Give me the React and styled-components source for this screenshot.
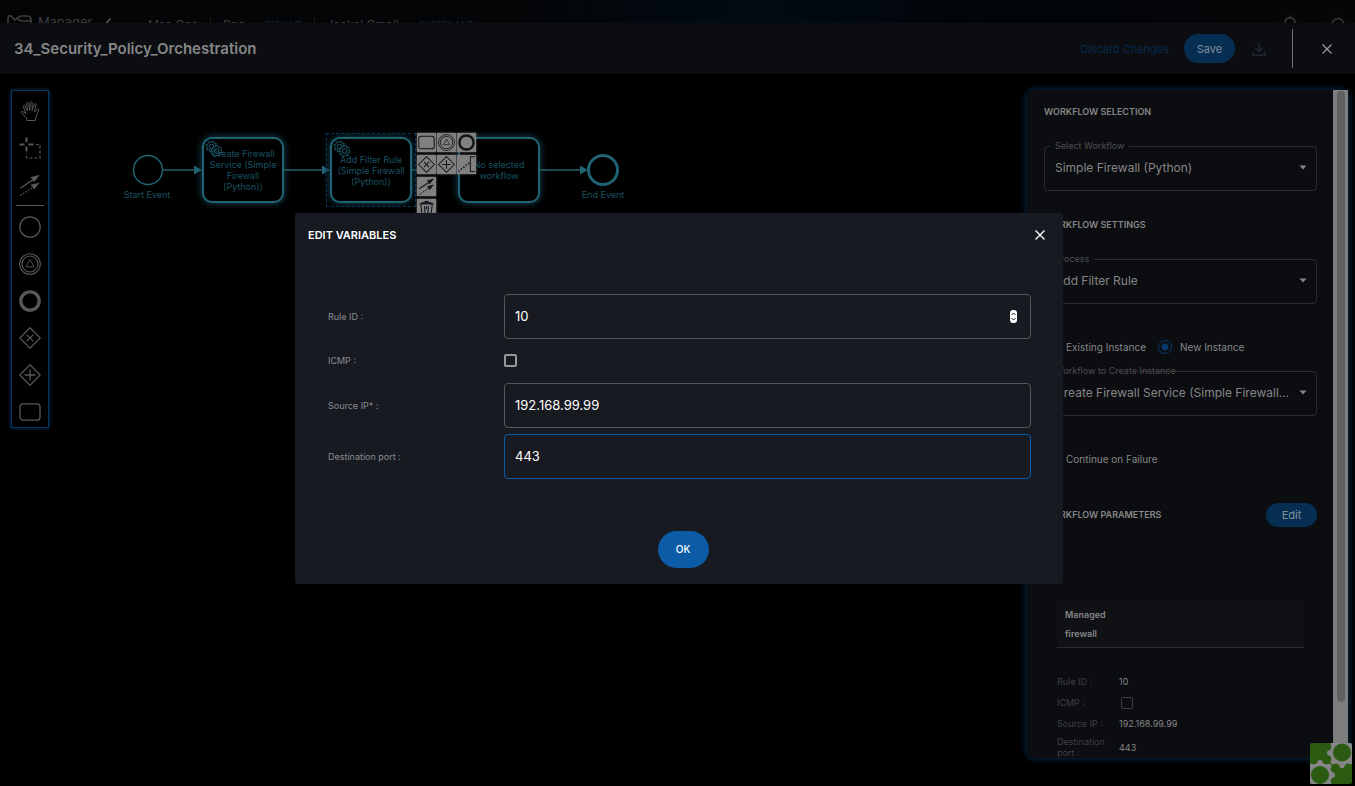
import React from "react";
import styled, { createGlobalStyle, css } from "styled-components";

const GlobalStyle = createGlobalStyle`
  * { box-sizing: border-box; }
  html, body, #root { height: 100%; }
  body {
    margin: 0;
    background: #000;
    color: #858687;
    font-family: Inter, Roboto, "Liberation Sans", sans-serif;
    font-size: 12px;
  }
  button, input, select { font: inherit; color: inherit; margin: 0; }
  button { padding: 0; border: 0; background: none; cursor: pointer; }
`;

/* ---------- page frame ---------- */

const Page = styled.div`
  min-height: 100vh;
  display: flex;
  flex-direction: column;
`;

const TopBar = styled.nav`
  height: 23px;
  overflow: hidden;
  display: flex;
  align-items: flex-start;
  padding: 13px 0 0 7px;
  color: #3c3d3f;
  background: linear-gradient(90deg, #040507 0%, #040507 38%, #000b14 56%, #020509 72%, #040506 100%);
`;

const Brand = styled.span`
  display: flex;
  gap: 6px;
  width: 97px;
  font-size: 13px;
  line-height: 18px;
`;

const Crumbs = styled.div`
  display: flex;
  gap: 12px;
  flex: 1;
  padding: 4px 0 0 36px;
  font-size: 12px;
  line-height: 16px;
`;

const Crumb = styled.span`
  display: flex;
  gap: 20px;
`;

const CrumbRule = styled.span`
  width: 1px;
  height: 16px;
  background: #17181b;
`;

const CrumbKind = styled.span`
  color: #1c2434;
  font-size: 9px;
`;

const TopActions = styled.div`
  display: flex;
  gap: 16px;
  padding-right: 1px;
`;

const RoundButton = styled.button`
  width: 32px;
  height: 32px;
  border-radius: 50%;
  margin-top: -5px;
  background: #060709;
`;

const EditorBar = styled.header`
  height: 51px;
  flex: none;
  display: flex;
  align-items: center;
  padding: 0 20px 0 14px;
  background: #0c0d10;
`;

const Title = styled.h1`
  margin: 0;
  flex: 1;
  font-size: 15px;
  font-weight: 600;
`;

const TextButton = styled.button`
  color: #042a4e;
  font-size: 11px;
`;

const Pill = styled.button`
  min-width: 51px;
  height: ${(p) => p.$height}px;
  border-radius: 20px;
  font-size: ${(p) => p.$font}px;
  font-weight: ${(p) => (p.$bright ? 500 : 400)};
  color: ${(p) => (p.$bright ? "#fff" : "#82909c")};
  background: ${(p) => (p.$bright ? "#0b5ba7" : "#062e53")};
`;

const EditorActions = styled.div`
  display: flex;
  align-items: center;
  gap: 15px;
`;

const IconButton = styled.button`
  display: flex;
  align-items: center;
  justify-content: center;
  width: ${(p) => p.$size}px;
  height: ${(p) => p.$size}px;
`;

const CloseArea = styled.div`
  display: flex;
  align-items: center;
  height: 39px;
  margin-left: 9px;
  padding-left: 26px;
  border-left: 1px solid #707173;
`;

const Workspace = styled.main`
  flex: 1;
  position: relative;
  display: flex;
  justify-content: space-between;
  padding: 16px 7px 28px 11px;
`;

/* ---------- palette ---------- */

const Palette = styled.div`
  align-self: flex-start;
  display: flex;
  flex-direction: column;
  align-items: center;
  width: 38px;
  padding-top: 5px;
  border: 1px solid #063763;
  box-shadow: 0 0 4px #063763;
  color: #585858;
`;

const PaletteGroup = styled.div`
  display: flex;
  flex-direction: column;
  align-items: center;
  gap: 7px;
  width: 28px;
  ${(p) =>
    p.$ruled
      ? css`
          padding-bottom: 5px;
          border-bottom: 1px solid #585858;
        `
      : css`
          padding-top: 6px;
        `}
`;

/* ---------- diagram ---------- */

const at = css`
  position: absolute;
  left: ${(p) => p.$x}px;
  top: ${(p) => p.$y}px;
`;

const Diagram = styled.div`
  position: absolute;
  left: 0;
  top: 0;
  width: 640px;
  height: 150px;
  color: #1a5361;
  font-size: 9px;
  line-height: 11px;
  text-align: center;
`;

const Edges = styled.svg`
  ${at}
`;

const TaskNode = styled.div`
  ${at}
  width: 82px;
  height: 66px;
  display: flex;
  align-items: center;
  justify-content: center;
  border: 2px solid #206373;
  border-radius: 10px;
  background: #000;
  box-shadow: 0 0 7px #174d5b;
  svg { position: absolute; left: 1px; top: 1px; }
`;

const TaskText = styled.div`
  position: relative;
`;

const Selection = styled.div`
  ${at}
  width: 90px;
  height: 74px;
  border: 1px dashed #06345c;
`;

const EventLabel = styled.div`
  ${at}
  width: 60px;
`;

const ContextPad = styled.div`
  ${at}
  display: flex;
  flex-direction: column;
  gap: 3px;
`;

const PadRow = styled.div`
  display: flex;
  gap: 1px;
`;

const PadButton = styled.button`
  display: flex;
  align-items: center;
  justify-content: center;
  width: 19px;
  height: 19px;
  color: #111519;
  background: #808080;
  box-shadow: 0 0 2px #777;
`;

/* ---------- side panel ---------- */

const SidePanel = styled.aside`
  display: flex;
  width: 321px;
  height: 668px;
  overflow: hidden;
  border-radius: 8px 0 0 8px;
  background: #0c0d10;
`;

const PanelGlow = styled.div`
  align-self: flex-start;
  border-radius: 8px;
  box-shadow: 0 0 6px 1px #052a49;
`;

const PanelBody = styled.div`
  flex: 1;
  min-width: 0;
  padding: 16px 16px 0 17px;
`;

const ScrollTrack = styled.div`
  width: 15px;
  padding: 1px 3px 0 4px;
  background: #7e7e7e;
`;

const ScrollThumb = styled.div`
  height: 611px;
  border-radius: 4px;
  background: #606060;
`;

const SectionTitle = styled.h2`
  margin: 0;
  font-size: 9px;
  font-weight: 600;
  line-height: 12px;
`;

const Field = styled.div`
  position: relative;
  margin: ${(p) => p.$top}px 0 ${(p) => p.$bottom}px;
`;

const FieldNotch = styled.span`
  position: absolute;
  left: 7px;
  top: 0;
  width: ${(p) => p.$width}px;
  height: 1px;
  background: #0c0d10;
`;

const FieldLabel = styled.label`
  position: absolute;
  left: 11px;
  top: -6px;
  color: #4e4f51;
  font-size: 9px;
  line-height: 12px;
`;

const FieldSelect = styled.select`
  display: block;
  width: 100%;
  height: 45px;
  padding: 0 24px 2px 10px;
  appearance: none;
  border: 1px solid #2b2c2f;
  border-radius: 4px;
  background: transparent;
  font-size: 12px;
  text-overflow: ellipsis;
  outline: 0;
`;

const Caret = styled.svg`
  position: absolute;
  right: 10px;
  top: 19px;
  pointer-events: none;
`;

const Choices = styled.div`
  display: flex;
  align-items: center;
  gap: 12px;
  height: 14px;
  font-size: 10px;
`;

const Choice = styled.label`
  display: flex;
  align-items: center;
  gap: 8px;
`;

const Radio = styled.input`
  appearance: none;
  width: 14px;
  height: 14px;
  border-radius: 50%;
  border: 1px solid ${(p) => (p.defaultChecked ? "#063c6c" : "#666")};
  background: ${(p) => (p.defaultChecked ? "radial-gradient(circle, #063c6c 3px, transparent 4px)" : "none")};
`;

const Check = styled.input`
  appearance: none;
  width: ${(p) => p.$size}px;
  height: ${(p) => p.$size}px;
  border: ${(p) => (p.$bright ? "2px solid #97989a" : "1px solid #3e3f41")};
  border-radius: 2px;
`;

const ParamHeader = styled.div`
  display: flex;
  align-items: center;
  justify-content: space-between;
  margin-top: 37px;
`;

const ManagedBox = styled.div`
  margin: 74px 13px 23px;
  padding: 4px 8px;
  border-bottom: 1px solid #2b2c2f;
  background: #101115;
  font-size: 9px;
  font-weight: 600;
  line-height: 19px;
`;

const Params = styled.dl`
  margin: 0 13px;
  font-size: 9px;
  line-height: 11px;
`;

const Param = styled.div`
  display: flex;
  align-items: center;
  min-height: ${(p) => (p.$tall ? 26 : 21)}px;
  dt { width: 62px; padding-right: 8px; color: #3f4042; }
  dd { margin: 0; display: flex; }
`;

const CheckSlot = styled.span`
  display: flex;
  padding-left: 2px;
`;

const HelpBadge = styled.button`
  position: absolute;
  right: 3px;
  bottom: 1px;
  width: 42px;
  height: 42px;
`;

/* ---------- dialog ---------- */

const Backdrop = styled.div`
  position: fixed;
  inset: 0;
  display: flex;
  align-items: center;
  justify-content: center;
  padding: 10px 0 0 3px;
`;

const Dialog = styled.section`
  width: 768px;
  max-width: 96%;
  border-radius: 3px;
  background: #181a21;
  color: #fff;
`;

const DialogHeader = styled.header`
  display: flex;
  align-items: center;
  justify-content: space-between;
  height: 45px;
  padding: 0 13px;
`;

const DialogTitle = styled.h2`
  margin: 0;
  font-size: 11px;
  font-weight: 600;
`;

const Form = styled.form`
  display: flex;
  flex-direction: column;
  gap: 6px;
  padding: 36px 32px 0 33px;
`;

const FormRow = styled.div`
  display: flex;
  align-items: center;
  min-height: 32px;
`;

const FormLabel = styled.label`
  width: 176px;
  color: #8b8c90;
  font-size: 9px;
`;

const InputBox = styled.div`
  flex: 1;
  display: flex;
  align-items: center;
  height: 45px;
  padding: 0 13px 0 10px;
  border: 1px solid ${(p) => (p.$active ? "#0b5ba7" : "#55575a")};
  border-radius: 4px;
`;

const Input = styled.input`
  flex: 1;
  min-width: 0;
  padding: 0;
  border: 0;
  outline: 0;
  background: none;
  font-size: 13px;
  appearance: textfield;
  &::-webkit-inner-spin-button { display: none; }
`;

const DialogActions = styled.footer`
  display: flex;
  justify-content: center;
  padding: 52px 0 16px 8px;
`;

/* ---------- drawings ---------- */

const Gear = ({ cx, cy, r, stroke }) => {
  const pts = [];
  for (let i = 0; i < 32; i++) {
    const rad = i % 4 < 2 ? r : r * 0.76;
    const a = ((i + 0.5) / 32) * Math.PI * 2;
    pts.push(`${(cx + rad * Math.cos(a)).toFixed(2)},${(cy + rad * Math.sin(a)).toFixed(2)}`);
  }
  return (
    <g fill="#000" stroke={stroke} strokeWidth="1">
      <polygon points={pts.join(" ")} />
      <circle cx={cx} cy={cy} r={r * 0.42} />
    </g>
  );
};

const Gears = () => (
  <svg width="18" height="18" viewBox="0 0 18 18">
    <Gear cx={6.5} cy={6.5} r={5.6} stroke="#206373" />
    <Gear cx={11.5} cy={11} r={5.6} stroke="#206373" />
  </svg>
);

const shapes = {
  hand: (
    <path
      d="M8 20.5 L7.4 18 L2.2 12.5 C1.6 11.7 2.8 10.8 3.7 11.5 L7 13.8 L4.2 6.4 C3.9 5.2 5.4 4.8 5.9 5.9 L8.5 11 L7.7 3.3 C7.7 2 9.3 2 9.5 3.2 L10.7 10.4 L11.4 2.4 C11.6 1.3 13.1 1.4 13.2 2.6 L13.1 10.6 L15.4 4.2 C15.9 3.1 17.2 3.6 17 4.8 L15.5 12 L18 9.4 C18.9 8.5 20.2 9 19.7 10.2 C18.3 13.5 17.6 16 16.6 18 L16.3 20.5 Z"
      strokeWidth="1"
    />
  ),
  lasso: (
    <>
      <path d="M7.5 0.5 V5.5 M7.5 9.5 V14.5 M0.5 7.5 H5.5 M9.5 7.5 H14.5" strokeWidth="2" />
      <path d="M17 7.5 H21 V21 H7.5 V16" strokeDasharray="3 2" strokeWidth="1.2" />
    </>
  ),
  connect: (
    <>
      <path d="M1.5 14 L14.5 5.5" strokeWidth="1.4" />
      <path d="M1.5 21.5 L14.5 13" strokeDasharray="1.5 1.5" strokeWidth="1.4" />
      <path d="M11.5 3.2 L20.8 0.8 L15.2 8 Z M11.5 10.8 L20.8 8.4 L15.2 15.6 Z" fill="currentColor" stroke="none" />
    </>
  ),
  circle: <circle cx="11" cy="11" r="10.2" strokeWidth="1.2" />,
  signal: (
    <>
      <circle cx="11" cy="11" r="10.3" strokeWidth="1.1" />
      <circle cx="11" cy="11" r="8" strokeWidth="1.1" />
      <path d="M11 6.5 L15 13.8 H7 Z" strokeWidth="0.9" />
    </>
  ),
  end: <circle cx="11" cy="11" r="9.2" strokeWidth="3.2" />,
  exclusive: <path d="M11 0.8 L21.2 11 L11 21.2 L0.8 11 Z M7.6 7.6 L14.4 14.4 M14.4 7.6 L7.6 14.4" strokeWidth="1.3" />,
  parallel: <path d="M11 0.8 L21.2 11 L11 21.2 L0.8 11 Z M11 5.6 V16.4 M5.6 11 H16.4" strokeWidth="1.3" />,
  task: <rect x="1" y="2.8" width="20" height="16.4" rx="3" strokeWidth="1.3" />,
  annotation: (
    <>
      <path d="M22 1 H16 V20 H22" strokeWidth="1.3" />
      <path d="M0.5 20 L15 8.5" strokeDasharray="2 2" strokeWidth="2" />
    </>
  ),
  trash: (
    <path
      d="M3.5 5.5 L5.5 21 H16.5 L18.5 5.5 M2 5 H20 M3.5 4.8 C5 2.5 17 2.5 18.5 4.8 M8.5 2 H13.5 M8.5 8 L9.3 20 M13.5 8 L12.7 20 M11 8 V12"
      strokeWidth="1.4"
    />
  ),
};

const Glyph = ({ name, size }) => (
  <svg width={size} height={size} viewBox="0 0 22 22" fill="none" stroke="currentColor" aria-hidden="true">
    {shapes[name]}
  </svg>
);

const Cross = ({ size, color }) => (
  <svg width={size} height={size} viewBox="0 0 10 10" stroke={color} strokeWidth="1.3" aria-hidden="true">
    <path d="M0.5 0.5 L9.5 9.5 M9.5 0.5 L0.5 9.5" />
  </svg>
);

const cog = (cx, cy, r) => {
  const pts = [];
  for (let i = 0; i < 32; i++) {
    const rad = i % 4 < 2 ? r + 3 : r;
    const a = ((i - 0.5) / 32) * Math.PI * 2;
    pts.push(`${(cx + rad * Math.cos(a)).toFixed(2)},${(cy + rad * Math.sin(a)).toFixed(2)}`);
  }
  return pts.join(" ");
};

const GreenGears = () => (
  <svg width="42" height="42" viewBox="0 0 42 42" aria-hidden="true">
    <clipPath id="badge">
      <rect width="42" height="41" rx="2" />
    </clipPath>
    <g clipPath="url(#badge)">
      <rect width="42" height="42" fill="#2a5b10" />
      <polygon points={cog(32, 10, 12)} fill="#858585" />
      <polygon points={cog(10, 32, 12)} fill="#858585" />
      <circle cx="32" cy="9.500" r="9" fill="#2a5b10" />
      <circle cx="10" cy="32" r="9" fill="#2a5b10" />
    </g>
  </svg>
);

/* ---------- data ---------- */

const creationTools = [
  ["circle", "Start event"],
  ["signal", "Intermediate event"],
  ["end", "End event"],
  ["exclusive", "Exclusive gateway"],
  ["parallel", "Parallel gateway"],
  ["task", "Task"],
];

const padRows = [
  ["task", "signal", "end"],
  ["exclusive", "parallel", "annotation"],
  ["connect"],
  ["trash"],
];

const tasks = [
  { x: 202, lines: ["Create Firewall", "Service (Simple", "Firewall", "(Python))"], gears: true },
  { x: 330, lines: ["Add Filter Rule", "(Simple Firewall", "(Python))"], gears: true },
  { x: 458, lines: ["No selected", "workflow"] },
];

const arrows = [
  [162, 202],
  [284, 330],
  [412, 458],
  [540, 588],
];

const SelectField = ({ id, label, value, top, bottom, notch }) => (
  <Field $top={top} $bottom={bottom}>
    <FieldSelect id={id} defaultValue={value}>
      <option>{value}</option>
    </FieldSelect>
    <FieldNotch $width={notch} />
    <FieldLabel htmlFor={id}>{label}</FieldLabel>
    <Caret width="8" height="5" viewBox="0 0 8 5">
      <path d="M0.500 0.500 H7.500 L4 4.500 Z" fill="#858687" />
    </Caret>
  </Field>
);

export default function App() {
  return (
    <Page>
      <GlobalStyle />
      <TopBar>
        <Brand>
          <svg width="25" height="16" viewBox="0 0 25 16" fill="none" stroke="#3c3d3f" strokeWidth="1.6">
            <path d="M1 12 V5 C1 2 3.500 2 5 4 L8 7 L11 4.500 Q12.500 3 15 3 H20 Q24 3 24 7 V12 M11 4.500 Q11 8 15 8 H24 M12 12 H21" />
          </svg>
          Manager
        </Brand>
        <svg width="8" height="12" viewBox="0 0 8 12" fill="none" stroke="#5c5d5f" strokeWidth="1.5">
          <path d="M6.500 5.500 L1.500 11" />
        </svg>
        <Crumbs>
          <Crumb>Msa Ops</Crumb>
          <CrumbRule />
          <Crumb>
            Bps <CrumbKind>TENANT</CrumbKind>
          </Crumb>
          <CrumbRule />
          <Crumb>
            Jackal Gmail <CrumbKind>SUBTENANT ::</CrumbKind>
          </Crumb>
        </Crumbs>
        <TopActions>
          <RoundButton aria-label="Notifications">
            <svg width="14" height="16" viewBox="0 0 14 16" fill="none" stroke="#3c3d3f" strokeWidth="1.4">
              <path d="M7 0.500 V3 M2 14 V8 Q2 3 7 3 Q12 3 12 8 V14" />
            </svg>
          </RoundButton>
          <RoundButton aria-label="Account">
            <svg width="14" height="14" viewBox="0 0 14 14" fill="none" stroke="#3c3d3f" strokeWidth="1.4">
              <circle cx="7" cy="8" r="5.500" />
            </svg>
          </RoundButton>
        </TopActions>
      </TopBar>

      <EditorBar>
        <Title>34_Security_Policy_Orchestration</Title>
        <EditorActions>
          <TextButton>Discard Changes</TextButton>
          <Pill $height={29} $font={11}>Save</Pill>
          <IconButton $size={18} aria-label="Download">
            <svg width="14" height="14" viewBox="0 0 14 14" fill="none" stroke="#222a38" strokeWidth="1.4">
              <path d="M7 0.500 V9.500 M3 5.500 L7 9.500 L11 5.500 M1 9.500 V13 H13 V9.500" />
            </svg>
          </IconButton>
          <CloseArea>
            <IconButton $size={16} aria-label="Close editor">
              <Cross size={10} color="#97989a" />
            </IconButton>
          </CloseArea>
        </EditorActions>
      </EditorBar>

      <Workspace>
        <Diagram>
          <Edges $x={0} $y={0} width="640" height="150" fill="none" stroke="#206373" strokeWidth="1.500">
            <circle cx="148" cy="96" r="14.500" />
            <circle cx="603" cy="96" r="14.500" strokeWidth="3" />
            {arrows.map(([from, to]) => (
              <g key={from}>
                <path d={`M${from} 96 H${to - 8}`} />
                <path d={`M${to - 8} 91.500 L${to} 96 L${to - 8} 100.500 Z`} fill="#206373" stroke="none" />
              </g>
            ))}
          </Edges>
          <EventLabel $x={117} $y={115}>Start Event</EventLabel>
          <EventLabel $x={573} $y={115}>End Event</EventLabel>
          {tasks.map((task) => (
            <TaskNode key={task.x} $x={task.x} $y={63}>
              {task.gears && <Gears />}
              <TaskText>
                {task.lines.map((line) => (
                  <div key={line}>{line}</div>
                ))}
              </TaskText>
            </TaskNode>
          ))}
          <Selection $x={326} $y={59} />
          <ContextPad $x={417} $y={59}>
            {padRows.map((row) => (
              <PadRow key={row[0]}>
                {row.map((name) => (
                  <PadButton key={name} aria-label={name}>
                    <Glyph name={name} size={17} />
                  </PadButton>
                ))}
              </PadRow>
            ))}
          </ContextPad>
        </Diagram>

        <Palette>
          <PaletteGroup $ruled>
            <IconButton $size={30} aria-label="Hand tool"><Glyph name="hand" size={22} /></IconButton>
            <IconButton $size={30} aria-label="Lasso tool"><Glyph name="lasso" size={22} /></IconButton>
            <IconButton $size={30} aria-label="Connect tool"><Glyph name="connect" size={22} /></IconButton>
          </PaletteGroup>
          <PaletteGroup>
            {creationTools.map(([name, label]) => (
              <IconButton key={name} $size={30} aria-label={label}>
                <Glyph name={name} size={22} />
              </IconButton>
            ))}
          </PaletteGroup>
        </Palette>

        <PanelGlow>
          <SidePanel>
            <PanelBody>
              <SectionTitle>WORKFLOW SELECTION</SectionTitle>
              <SelectField id="workflow" label="Select Workflow" value="Simple Firewall (Python)" top={28} bottom={28} notch={78} />
              <SectionTitle>WORKFLOW SETTINGS</SectionTitle>
              <SelectField id="process" label="Process" value="Add Filter Rule" top={28} bottom={36} notch={43} />
              <Choices>
                <Choice>
                  <Radio type="radio" name="instance" />
                  Existing Instance
                </Choice>
                <Choice>
                  <Radio type="radio" name="instance" defaultChecked />
                  New Instance
                </Choice>
              </Choices>
              <SelectField
                id="creator"
                label="Workflow to Create Instance"
                value="Create Firewall Service (Simple Firewall (Python))"
                top={17}
                bottom={36}
                notch={87}
              />
              <Choices>
                <Choice>
                  <Check type="checkbox" $size={14} />
                  Continue on Failure
                </Choice>
              </Choices>
              <ParamHeader>
                <SectionTitle>WORKFLOW PARAMETERS</SectionTitle>
                <Pill $height={24} $font={11}>Edit</Pill>
              </ParamHeader>
              <ManagedBox>
                <div>Managed</div>
                <div>firewall</div>
              </ManagedBox>
              <Params>
                <Param><dt>Rule ID :</dt><dd>10</dd></Param>
                <Param>
                  <dt>ICMP :</dt>
                  <dd><CheckSlot><Check type="checkbox" $size={12} aria-label="ICMP value" /></CheckSlot></dd>
                </Param>
                <Param><dt>Source IP :</dt><dd>192.168.99.99</dd></Param>
                <Param $tall><dt>Destination port :</dt><dd>443</dd></Param>
              </Params>
            </PanelBody>
            <ScrollTrack><ScrollThumb /></ScrollTrack>
          </SidePanel>
        </PanelGlow>
        <HelpBadge aria-label="Process status"><GreenGears /></HelpBadge>
      </Workspace>

      <Backdrop>
        <Dialog role="dialog" aria-labelledby="dialog-title">
          <DialogHeader>
            <DialogTitle id="dialog-title">EDIT VARIABLES</DialogTitle>
            <IconButton $size={20} aria-label="Close">
              <Cross size={10} color="#fff" />
            </IconButton>
          </DialogHeader>
          <Form>
            <FormRow>
              <FormLabel htmlFor="rule">Rule ID :</FormLabel>
              <InputBox>
                <Input id="rule" type="number" defaultValue="10" />
                <svg width="7" height="13" viewBox="0 0 7 13" aria-hidden="true">
                  <rect width="7" height="13" rx="3" fill="#fff" />
                  <path d="M1.500 5 L3.500 3 L5.500 5 M1.500 8 L3.500 10 L5.500 8" fill="none" stroke="#222" />
                </svg>
              </InputBox>
            </FormRow>
            <FormRow>
              <FormLabel htmlFor="icmp">ICMP :</FormLabel>
              <Check id="icmp" type="checkbox" $size={13} $bright />
            </FormRow>
            <FormRow>
              <FormLabel htmlFor="source">Source IP* :</FormLabel>
              <InputBox>
                <Input id="source" defaultValue="192.168.99.99" />
              </InputBox>
            </FormRow>
            <FormRow>
              <FormLabel htmlFor="port">Destination port :</FormLabel>
              <InputBox $active>
                <Input id="port" defaultValue="443" />
              </InputBox>
            </FormRow>
          </Form>
          <DialogActions>
            <Pill $height={37} $font={10} $bright>OK</Pill>
          </DialogActions>
        </Dialog>
      </Backdrop>
    </Page>
  );
}
